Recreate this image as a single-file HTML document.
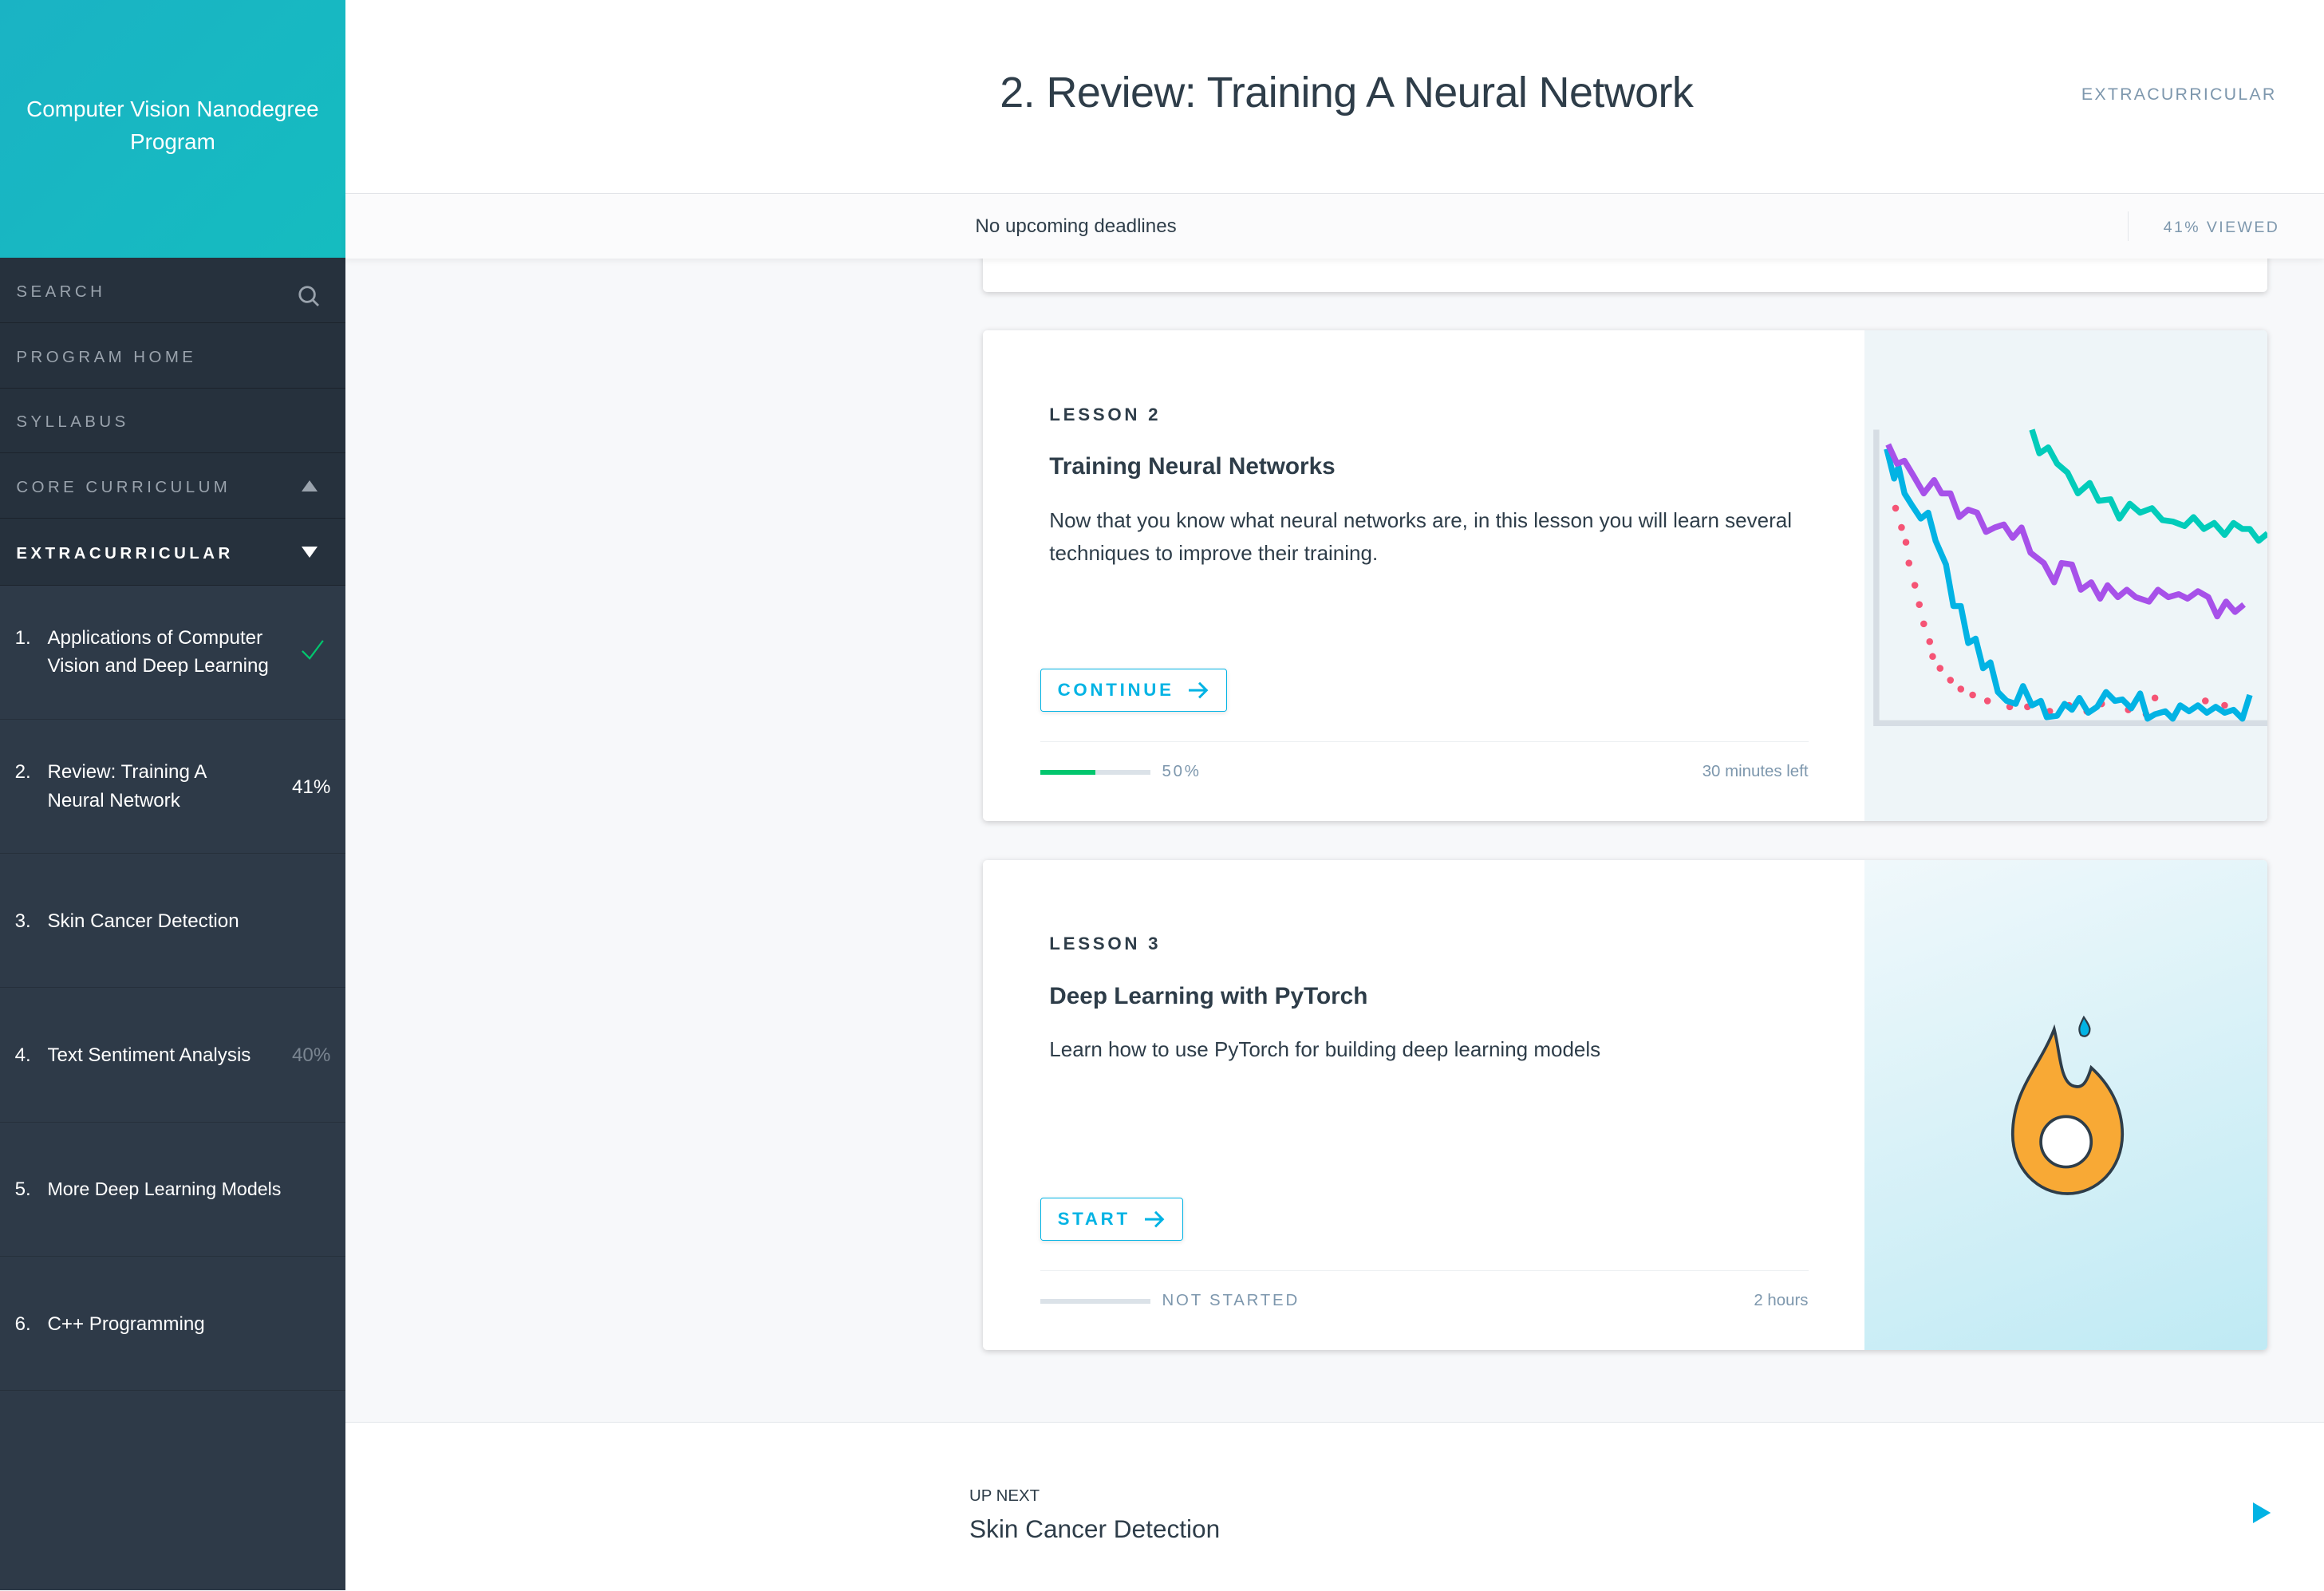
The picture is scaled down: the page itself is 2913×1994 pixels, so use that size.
<!DOCTYPE html>
<html><head><meta charset="utf-8"><style>
html,body{margin:0;padding:0}
body{width:1568px;height:1073px;zoom:1.8578;overflow:hidden;background:#f7f8fa;font-family:"Liberation Sans",sans-serif;position:relative}
.sb{position:absolute;left:0;top:0;width:233px;height:1073px;background:#2e3a48}
.hero{height:174px;background:linear-gradient(135deg,#1ab3c4,#15bcc0);color:#fff;font-size:15px;text-align:center;display:flex;align-items:center;justify-content:center;line-height:22px;box-sizing:border-box;padding-bottom:4px}
.nav{height:44px;box-sizing:border-box;background:#26313d;border-bottom:1px solid #1c232c;color:#9aa3ad;font-size:11px;letter-spacing:2.4px;padding-left:11px;padding-top:3px;display:flex;align-items:center;position:relative}
.nav.w{color:#fff;font-weight:bold;height:45px}
.les{height:90px;border-bottom:1px solid #26303b;color:#fff;font-size:13px;line-height:19px;position:relative}
.les .n{position:absolute;left:10px}
.les .t{position:absolute;left:32px;width:160px}
.les .r{position:absolute;right:10px;font-size:13px}
.main{position:absolute;left:233px;top:0;right:0}
.hd{height:130px;background:#fff;border-bottom:1px solid #e3e6ea;position:relative}
.bar{height:44px;background:#fbfbfc;position:relative;box-shadow:0 2px 4px rgba(0,0,0,.06)}
.card{position:absolute;left:430px;width:867px;height:331px;background:#fff;box-shadow:0 1px 4px rgba(0,0,0,.18);border-radius:3px;overflow:hidden}
.card .lab{position:absolute;left:45px;top:50px;font-size:12px;letter-spacing:2px;color:#2e3d49;font-weight:bold}
.card h3{position:absolute;left:45px;top:83px;margin:0;font-size:16px;color:#2e3d49;font-weight:bold}
.card p{position:absolute;left:45px;top:117px;margin:0;width:505px;font-size:14px;line-height:22px;color:#2e3d49}
.btn{position:absolute;left:39px;top:228px;height:28px;border:1px solid #02b3e4;border-radius:2px;color:#02b3e4;font-size:12px;letter-spacing:2px;font-weight:bold;display:flex;align-items:center;padding:0 11px;box-shadow:0 1px 3px rgba(0,0,0,.1)}
.foot{position:absolute;left:39px;right:310px;top:277px;border-top:1px solid #edf0f2;font-size:11px;color:#7d97ad}
.img{position:absolute;left:595px;top:0;width:272px;height:331px}
</style></head><body>
<div class="sb">
<div class="hero">Computer Vision Nanodegree<br>Program</div>
<div class="nav">SEARCH<svg style="position:absolute;right:17px;top:18px" width="15" height="15" viewBox="0 0 15 15"><circle cx="6.5" cy="6.5" r="5" fill="none" stroke="#9aa3ad" stroke-width="1.5"/><path d="M10 10l4 4" stroke="#9aa3ad" stroke-width="1.5"/></svg></div>
<div class="nav">PROGRAM HOME</div>
<div class="nav">SYLLABUS</div>
<div class="nav">CORE CURRICULUM<span style="position:absolute;right:19px;top:18px;border:5.5px solid transparent;border-bottom:8px solid #9aa3ad;border-top:0"></span></div>
<div class="nav w">EXTRACURRICULAR<span style="position:absolute;right:19px;top:19px;border:5.5px solid transparent;border-top:8px solid #fff;border-bottom:0"></span></div>
<div class="les"><span class="n" style="top:26px">1.</span><span class="t" style="top:26px">Applications of Computer Vision and Deep Learning</span><svg style="position:absolute;right:14px;top:36px" width="16" height="14"><path d="M1 8l5 5 9-12" fill="none" stroke="#02c66e" stroke-width="1.2"/></svg></div>
<div class="les"><span class="n" style="top:26px">2.</span><span class="t" style="top:26px;width:120px">Review: Training A Neural Network</span><span class="r" style="top:36px">41%</span></div>
<div class="les"><span class="n" style="top:36px">3.</span><span class="t" style="top:36px">Skin Cancer Detection</span></div>
<div class="les"><span class="n" style="top:36px">4.</span><span class="t" style="top:36px">Text Sentiment Analysis</span><span class="r" style="top:36px;color:#7a8591">40%</span></div>
<div class="les"><span class="n" style="top:36px">5.</span><span class="t" style="top:36px;width:180px;font-size:12.5px">More Deep Learning Models</span></div>
<div class="les"><span class="n" style="top:36px">6.</span><span class="t" style="top:36px">C++ Programming</span></div>
</div>
<div class="main">
<div class="card" style="top:120px;height:77px"></div>
<div class="hd"><div style="position:absolute;left:0;right:0;top:46px;text-align:center;font-size:29px;color:#2e3d49;padding-left:16px;letter-spacing:-0.3px">2. Review: Training A Neural Network</div><div style="position:absolute;right:32px;top:57px;font-size:11.5px;letter-spacing:1.2px;color:#7d97ad">EXTRACURRICULAR</div></div>
<div class="bar"><div style="position:absolute;left:425px;top:15px;font-size:13px;color:#2e3d49">No upcoming deadlines</div><div style="position:absolute;right:132px;top:12px;height:20px;border-left:1px solid #e3e6ea"></div><div style="position:absolute;right:30px;top:17px;font-size:10.5px;letter-spacing:1.3px;color:#7d97ad">41% VIEWED</div></div>

<div class="card" style="top:223px">
<div class="lab">LESSON 2</div><h3>Training Neural Networks</h3>
<p>Now that you know what neural networks are, in this lesson you will learn several techniques to improve their training.</p>
<div class="btn">CONTINUE <svg style="margin-left:10px" width="14" height="12"><path d="M0 6h12M7 1l5 5-5 5" fill="none" stroke="#02b3e4" stroke-width="1.6"/></svg></div>
<div class="foot"><div style="position:absolute;left:0;top:19px;width:74px;height:3px;background:#dbe2e8"><div style="width:37px;height:3px;background:#02c66e"></div></div><span style="position:absolute;left:82px;top:14px;letter-spacing:1.5px">50%</span><span style="position:absolute;right:0;top:14px">30 minutes left</span></div>
<div class="img" style="background:#eef5f8">
<svg width="272" height="331" viewBox="0 0 272 331">
<path d="M8 67V265H272" fill="none" stroke="#d6dde4" stroke-width="4"/>
<g fill="#f55475">
<circle cx="21" cy="120" r="2.3"/><circle cx="25" cy="133" r="2.3"/><circle cx="28" cy="143" r="2.3"/><circle cx="30" cy="157" r="2.3"/><circle cx="34" cy="172" r="2.3"/><circle cx="37" cy="185" r="2.3"/><circle cx="40" cy="198" r="2.3"/><circle cx="44" cy="210" r="2.3"/><circle cx="46" cy="220" r="2.3"/><circle cx="51" cy="228" r="2.3"/><circle cx="58" cy="236" r="2.3"/><circle cx="65" cy="242" r="2.3"/><circle cx="73" cy="246" r="2.3"/><circle cx="83" cy="250" r="2.3"/><circle cx="98" cy="254" r="2.3"/><circle cx="110" cy="254" r="2.3"/><circle cx="125" cy="257" r="2.3"/><circle cx="138" cy="253" r="2.3"/><circle cx="150" cy="257" r="2.3"/><circle cx="160" cy="252" r="2.3"/><circle cx="178" cy="256" r="2.3"/><circle cx="190" cy="259" r="2.3"/><circle cx="196" cy="248" r="2.3"/><circle cx="230" cy="250" r="2.3"/><circle cx="243" cy="253" r="2.3"/>
</g>
<path d="M15 80 L20 100 L23 92 L27 110 L32 118 L38 127 L43 123 L48 142 L55 158 L60 186 L65 186 L70 211 L75 208 L80 228 L85 224 L90 244 L96 250 L102 252 L107 240 L113 253 L119 250 L123 261 L130 260 L135 252 L140 256 L145 248 L151 258 L157 254 L163 244 L169 250 L174 249 L180 255 L186 245 L191 262 L196 259 L203 257 L208 262 L213 253 L219 257 L225 253 L231 258 L237 254 L243 258 L249 256 L255 262 L260 246" fill="none" stroke="#02b3e4" stroke-width="4" stroke-linejoin="round"/>
<path d="M16 77 L22 90 L27 88 L33 98 L40 110 L47 101 L52 110 L58 110 L64 126 L70 121 L76 123 L82 136 L88 133 L94 131 L100 140 L106 133 L112 150 L121 157 L128 170 L133 157 L140 158 L146 175 L153 170 L159 181 L164 172 L171 180 L177 175 L183 180 L192 183 L198 175 L205 180 L212 178 L218 181 L225 176 L232 180 L238 193 L244 183 L250 190 L256 185" fill="none" stroke="#a751e9" stroke-width="4" stroke-linejoin="round"/>
<path d="M113 67 L118 83 L124 79 L130 90 L137 96 L144 110 L152 103 L158 115 L166 114 L172 127 L179 117 L186 123 L194 120 L201 128 L208 129 L216 132 L222 126 L229 134 L236 130 L243 138 L249 130 L255 134 L260 134 L266 142 L272 137" fill="none" stroke="#02ccba" stroke-width="4" stroke-linejoin="round"/>
</svg></div>
</div>

<div class="card" style="top:580px">
<div class="lab">LESSON 3</div><h3>Deep Learning with PyTorch</h3>
<p>Learn how to use PyTorch for building deep learning models</p>
<div class="btn">START <svg style="margin-left:10px" width="14" height="12"><path d="M0 6h12M7 1l5 5-5 5" fill="none" stroke="#02b3e4" stroke-width="1.6"/></svg></div>
<div class="foot"><div style="position:absolute;left:0;top:19px;width:74px;height:3px;background:#dbe2e8"></div><span style="position:absolute;left:82px;top:14px;letter-spacing:1.5px">NOT STARTED</span><span style="position:absolute;right:0;top:14px">2 hours</span></div>
<div class="img" style="background:linear-gradient(160deg,#f0f8fb,#bfeaf4)">
<svg width="272" height="331" viewBox="0 0 272 331"><path d="M128 114 C118 140 100 155 100 185 C100 208 117 225 137 225 C157 225 174 208 174 185 C174 165 164 150 153 140 C150 150 147 155 140 152 C132 148 132 130 128 114 Z" fill="#f8a935" stroke="#2e3d49" stroke-width="2"/><circle cx="136" cy="190" r="17" fill="#fff" stroke="#2e3d49" stroke-width="2"/><path d="M148 106 C145 112 144 114 146 118 C149 120 152 118 152 114 C152 112 150 109 148 106Z" fill="#02b3e4" stroke="#2e3d49" stroke-width="1.2"/></svg>
</div>
</div>

<div style="position:absolute;left:0;right:0;top:959px;height:114px;background:#fff;border-top:1px solid #e3e6ea">
<div style="position:absolute;left:421px;top:44px;font-size:11px;color:#2e3d49">UP NEXT</div>
<div style="position:absolute;left:421px;top:62px;font-size:17px;color:#2e3d49">Skin Cancer Detection</div>
<svg style="position:absolute;right:36px;top:54px" width="12" height="14"><path d="M0 0L12 7 0 14Z" fill="#02b3e4"/></svg>
</div>
</div>
</body></html>
